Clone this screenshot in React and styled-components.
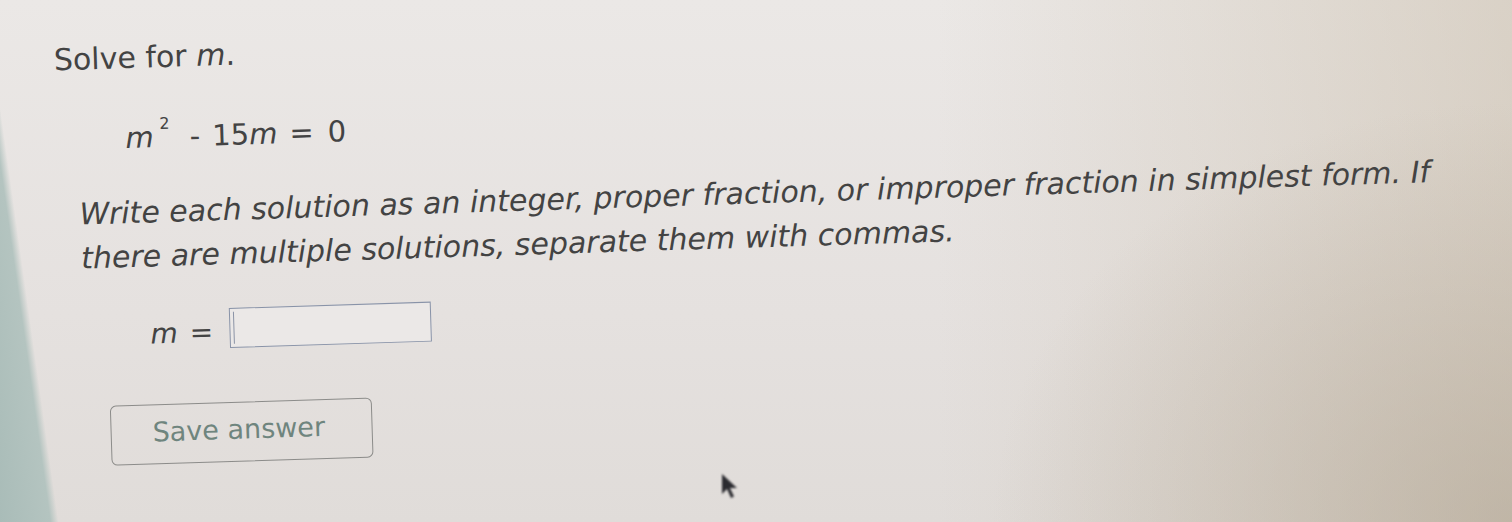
import styled, { createGlobalStyle } from "styled-components"

const GlobalStyle = createGlobalStyle`
    html, body {
        margin: 0;
        padding: 0;
        overflow: hidden;
    }
    body {
        font-family: "DejaVu Sans", Verdana, sans-serif;
    }
`

const Screen = styled.div`
    position: relative;
    width: 1512px;
    height: 522px;
    overflow: hidden;
    background:
        linear-gradient(82deg, #a9bcb8 0, #b4c4c0 50px, rgba(230, 226, 224, 0) 58px),
        radial-gradient(ellipse 520px 420px at 1512px 522px, rgba(176, 164, 146, 0.55), rgba(176, 164, 146, 0) 100%),
        linear-gradient(to right, rgba(0, 0, 0, 0) 0, rgba(0, 0, 0, 0) 62%, rgba(196, 182, 160, 0.45) 100%),
        linear-gradient(to bottom, #ebe8e6 0%, #e5e1df 60%, #e0dcd9 100%);
`

// the photo was taken at a slight angle, so the whole sheet is tilted
const Content = styled.div`
    display: flex;
    flex-direction: column;
    align-items: flex-start;
    color: #434343;
    transform: rotate(-1.8deg);
    transform-origin: 0 0;
`

const Title = styled.h1`
    margin: 44px 0 0 52px;
    font-size: 30px;
    font-weight: 400;
    line-height: 36px;
`

const Var = styled.span`
    font-style: italic;
`

const Equation = styled.div`
    margin: 42px 0 0 121px;
    font-size: 29px;
    line-height: 40px;
    display: flex;
    align-items: baseline;
`

const Sup = styled.sup`
    font-size: 16px;
    margin-left: 6px;
    position: relative;
    top: -18px;
`

const Op = styled.span`
    margin: 0 ${(p) => p.$r || 12}px 0 ${(p) => p.$l || 12}px;
`

const Prompt = styled.p`
    margin: 28px 0 0 73px;
    font-size: 30px;
    font-style: italic;
    line-height: 44px;
    white-space: nowrap;
`

const AnswerRow = styled.div`
    margin: 32px 0 0 140px;
    display: flex;
    align-items: center;
    gap: 16px;
    font-size: 28px;
`

const Label = styled.span`
    display: flex;
    align-items: baseline;
    gap: 12px;
    position: relative;
    top: 3px;
`

const AnswerBox = styled.div`
    width: 202px;
    height: 40px;
    border: 1.5px solid #8993a8;
    background: #ebe8e7;
    display: flex;
    align-items: stretch;
    padding: 3px 0;
    box-sizing: border-box;
`

const Caret = styled.span`
    width: 1.5px;
    margin-left: 3px;
    background: #8b93a6;
`

const SaveButton = styled.button`
    margin: 54px 0 0 97px;
    width: 262px;
    height: 60px;
    border: 1.5px solid #8c8c8a;
    border-radius: 6px;
    background: transparent;
    font-family: "DejaVu Sans", Verdana, sans-serif;
    font-size: 27px;
    color: #6f857e;
    text-align: left;
    padding: 0 0 6px 41px;
    cursor: pointer;
`

const Pointer = styled.svg`
    position: absolute;
    left: 720px;
    top: 472px;
    filter: blur(0.8px);
`

export default function App() {
    return (
        <Screen>
            <GlobalStyle />
            <Content>
                <Title>Solve for <Var>m</Var>.</Title>
                <Equation>
                    <Var>m</Var>
                    <Sup>2</Sup>
                    <Op $l={20} $r={12}>-</Op>
                    15<Var>m</Var>
                    <Op $l={12} $r={14}>=</Op>
                    0
                </Equation>
                <Prompt>
                    Write each solution as an integer, proper fraction, or improper fraction in simplest form. If
                    <br />
                    there are multiple solutions, separate them with commas.
                </Prompt>
                <AnswerRow>
                    <Label><Var>m</Var><span>=</span></Label>
                    <AnswerBox><Caret /></AnswerBox>
                </AnswerRow>
                <SaveButton>Save answer</SaveButton>
            </Content>
            <Pointer width="24" height="30" viewBox="0 0 24 30">
                <path d="M2 2 L2 22 L7 17 L11 26 L14 24.5 L10 16 L17 16 Z" fill="#2b2b30" />
            </Pointer>
        </Screen>
    )
}
